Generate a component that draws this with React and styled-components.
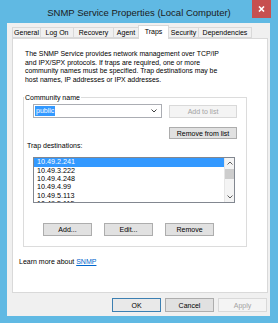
import React from 'react';
import styled, { createGlobalStyle } from 'styled-components';

const GlobalStyle = createGlobalStyle`
  html, body { margin: 0; padding: 0; background: #60b9e3; }
  body {
    font-family: "Liberation Sans", Arial, sans-serif;
    font-size: 7px;
    color: #000;
    overflow: hidden;
  }
  * { box-sizing: border-box; }
`;

const Window = styled.div`
  width: 278px;
  height: 323px;
  background: #60b9e3;
  display: flex;
  flex-direction: column;
`;

const TitleBar = styled.div`
  height: 23px;
  flex: none;
  display: grid;
  grid-template-columns: 1fr auto 1fr;
  align-items: start;
`;

const Title = styled.div`
  grid-column: 2;
  font-size: 9.5px;
  line-height: 23px;
  padding-top: 1px;
  color: #1b1b1b;
  white-space: nowrap;
`;

const Close = styled.div`
  grid-column: 3;
  justify-self: end;
  margin-right: 7px;
  width: 19px;
  height: 18px;
  background: #c75050;
  display: flex;
  align-items: center;
  justify-content: center;
`;

const Body = styled.div`
  flex: 1;
  margin: 0 8px 7px 7px;
  background: #f0f0f0;
  padding: 2px 2px 0 5px;
  display: flex;
  flex-direction: column;
`;

const TabStrip = styled.div`
  height: 13px;
  display: flex;
  align-items: flex-end;
`;

const Tab = styled.div`
  width: ${(p) => p.$w}px;
  height: ${(p) => (p.$active ? 14 : 11)}px;
  margin-left: ${(p) => (p.$first ? 0 : -1)}px;
  margin-bottom: ${(p) => (p.$active ? -1 : 0)}px;
  border: 1px solid #d9d9d9;
  border-bottom: ${(p) => (p.$active ? 'none' : '1px solid #d9d9d9')};
  background: ${(p) => (p.$active ? '#fff' : '#f0f0f0')};
  position: relative;
  z-index: ${(p) => (p.$active ? 1 : 0)};
  font-size: 7px;
  line-height: ${(p) => (p.$active ? 11 : 9)}px;
  text-align: center;
  white-space: nowrap;
`;

const Panel = styled.div`
  width: 256px;
  height: 255px;
  border: 1px solid #d9d9d9;
  background: #fff;
  padding: 11px 0 0 6px;
  display: flex;
  flex-direction: column;
  align-items: flex-start;
`;

const Description = styled.div`
  margin-left: 6px;
  font-size: 6.9px;
  line-height: 8.7px;
  white-space: nowrap;
`;

const Group = styled.fieldset`
  margin: 8px 0 0 4px;
  padding: 0 0 10px 0;
  width: 224px;
  min-inline-size: 0;
  border: 1px solid #dcdcdc;
`;

const Legend = styled.legend`
  padding: 0 1px;
  font-size: 7px;
  line-height: 9px;
`;

const ComboRow = styled.div`
  display: flex;
  align-items: flex-start;
  margin: 2.5px 0 0 9px;
  gap: 7px;
`;

const Combo = styled.div`
  width: 129px;
  height: 14px;
  border: 1px solid #abadb3;
  background: #fff;
  display: flex;
  align-items: center;
  padding: 0 4px 0 1px;
  justify-content: space-between;
`;

const Selected = styled.span`
  background: #3399ff;
  color: #fff;
  font-size: 7px;
  line-height: 10px;
  padding: 0 1px;
`;

const Button = styled.div`
  width: ${(p) => p.$w || 49}px;
  height: ${(p) => p.$h || 13}px;
  margin-top: ${(p) => p.$mt || 0}px;
  border: 1px solid ${(p) => (p.$disabled ? '#d9d9d9' : p.$default ? '#3c7fb1' : '#adadad')};
  background: ${(p) => (p.$disabled ? '#f4f4f4' : p.$default ? '#e9e9e9' : '#e1e1e1')};
  color: ${(p) => (p.$disabled ? '#a3a3a3' : '#000')};
  font-size: 7px;
  display: flex;
  align-items: center;
  justify-content: center;
  white-space: nowrap;
  flex: none;
`;

const RightRow = styled.div`
  display: flex;
  justify-content: flex-end;
  padding-right: 9px;
  margin-top: 9px;
`;

const FieldLabel = styled.div`
  margin: 2px 0 0 3px;
  font-size: 7px;
  line-height: 9px;
`;

const ListBox = styled.div`
  margin: 7px 0 0 9px;
  width: 202px;
  height: 46px;
  border: 1px solid #828790;
  background: #fff;
  display: flex;
`;

const Items = styled.div`
  flex: 1;
  overflow: hidden;
`;

const Item = styled.div`
  height: 8.3px;
  line-height: 8.3px;
  font-size: 7.2px;
  padding-left: 3px;
  background: ${(p) => (p.$selected ? '#3399ff' : 'transparent')};
  color: ${(p) => (p.$selected ? '#fff' : '#000')};
  white-space: nowrap;
`;

const ScrollBar = styled.div`
  width: 10px;
  background: #f4f4f4;
  border-left: 1px solid #e6e6e6;
  display: flex;
  flex-direction: column;
`;

const Arrow = styled.div`
  height: 10px;
  display: flex;
  align-items: center;
  justify-content: center;
`;

const Thumb = styled.div`
  height: 10px;
  margin: 1px 0 0 0;
  background: #cdcdcd;
`;

const Spacer = styled.div`
  flex: 1;
`;

const ActionRow = styled.div`
  display: flex;
  gap: 12px;
  margin-top: 20px;
  padding-left: 19px;
`;

const LearnMore = styled.div`
  margin-top: 10px;
  font-size: 7px;
  line-height: 9px;
`;

const Link = styled.a`
  color: #0066cc;
  text-decoration: underline;
`;

const Footer = styled.div`
  display: flex;
  justify-content: flex-end;
  gap: 4px;
  margin-top: 5px;
  padding-right: 1px;
`;

const tabs = [
  { label: 'General', w: 29 },
  { label: 'Log On', w: 34 },
  { label: 'Recovery', w: 41 },
  { label: 'Agent', w: 26 },
  { label: 'Traps', w: 31, active: true },
  { label: 'Security', w: 31 },
  { label: 'Dependencies', w: 54 },
];

const lines = [
  'The SNMP Service provides network management over TCP/IP',
  'and IPX/SPX protocols. If traps are required, one or more',
  'community names must be specified. Trap destinations may be',
  'host names, IP addresses or IPX addresses.',
];

const destinations = ['10.49.2.241', '10.49.3.222', '10.49.4.248', '10.49.4.99', '10.49.5.113', '10.49.5.115'];

const Chevron = ({ up, color = '#606060' }) => (
  <svg width="6" height="4" viewBox="0 0 6 4">
    <path d={up ? 'M0.5 3.5 L3 1 L5.5 3.5' : 'M0.5 0.5 L3 3 L5.5 0.5'} fill="none" stroke={color} strokeWidth="1" />
  </svg>
);

export default function App() {
  return (
    <Window>
      <GlobalStyle />
      <TitleBar>
        <Title>SNMP Service Properties (Local Computer)</Title>
        <Close>
          <svg width="7" height="6" viewBox="0 0 7 6">
            <path d="M1 0.5 L6 5.5 M6 0.5 L1 5.5" stroke="#fff" strokeWidth="1.6" />
          </svg>
        </Close>
      </TitleBar>
      <Body>
        <TabStrip>
          {tabs.map((t, i) => (
            <Tab key={t.label} $w={t.w} $active={t.active} $first={i === 0}>{t.label}</Tab>
          ))}
        </TabStrip>
        <Panel>
          <Description>
            {lines.map((l) => (<div key={l}>{l}</div>))}
          </Description>
          <Group>
            <Legend>Community name</Legend>
            <ComboRow>
              <Combo>
                <Selected>public</Selected>
                <Chevron color="#404040" />
              </Combo>
              <Button $w={68} $mt={1} $disabled>Add to list</Button>
            </ComboRow>
            <RightRow>
              <Button $w={68} $h={12}>Remove from list</Button>
            </RightRow>
            <FieldLabel>Trap destinations:</FieldLabel>
            <ListBox>
              <Items>
                {destinations.map((d, i) => (
                  <Item key={d} $selected={i === 0}>{d}</Item>
                ))}
              </Items>
              <ScrollBar>
                <Arrow><Chevron up /></Arrow>
                <Thumb />
                <Spacer />
                <Arrow><Chevron /></Arrow>
              </ScrollBar>
            </ListBox>
            <ActionRow>
              <Button>Add...</Button>
              <Button>Edit...</Button>
              <Button>Remove</Button>
            </ActionRow>
          </Group>
          <LearnMore>Learn more about <Link>SNMP</Link></LearnMore>
        </Panel>
        <Footer>
          <Button $h={14} $default>OK</Button>
          <Button $h={14}>Cancel</Button>
          <Button $h={14} $disabled>Apply</Button>
        </Footer>
      </Body>
    </Window>
  );
}
